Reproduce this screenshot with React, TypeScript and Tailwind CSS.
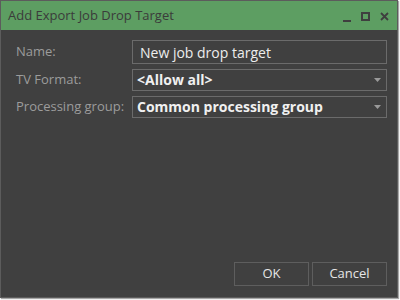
import React from "react";

function Field({ label, children }: { label: string; children: React.ReactNode }) {
  return (
    <div className="flex items-center">
      <div className="w-[116px] text-[13px] text-[#9c9c9c]">{label}</div>
      <div className="flex-1">{children}</div>
    </div>
  );
}

function Select({ value }: { value: string }) {
  return (
    <div className="h-[22px] border border-[#6b6b6b] flex items-center justify-between pl-[4px] pr-[4px]">
      <span className="text-[14px] font-bold text-[#f0f0f0] leading-none">{value}</span>
      <svg width="8" height="5" viewBox="0 0 8 5" className="mr-[0px]">
        <path d="M0 0h7L3.5 4z" fill="#9a9a9a" />
      </svg>
    </div>
  );
}

export default function App() {
  return (
    <div className="w-[400px] h-[300px] bg-white" style={{ fontFamily: '"Open Sans", "Noto Sans", sans-serif' }}>
      <div className="w-[398px] h-[298px] border border-[#5c5c5c] bg-[#404040] flex flex-col shadow-[1px_1px_1px_rgba(0,0,0,0.35)]">
        {/* Title bar */}
        <div className="h-[29px] bg-[#5d9e62] flex items-center justify-between pl-[7px] pr-[8px]">
          <span className="text-[13px] text-[#3b3b3b]">Add Export Job Drop Target</span>
          <div className="flex items-center gap-[10px] pt-[2px]">
            <svg width="8" height="10" viewBox="0 0 8 10">
              <rect x="0" y="8" width="8" height="2" fill="#3f3f3f" />
            </svg>
            <svg width="9" height="9" viewBox="0 0 9 9">
              <rect x="1" y="1" width="7" height="7" fill="none" stroke="#3f3f3f" strokeWidth="2" />
            </svg>
            <svg width="9" height="9" viewBox="0 0 9 9">
              <path d="M1 1l7 7M8 1l-7 7" stroke="#3f3f3f" strokeWidth="1.8" />
            </svg>
          </div>
        </div>

        {/* Form */}
        <div className="flex-1 flex flex-col pl-[15px] pr-[10px] pt-[10px]">
          <div className="flex flex-col gap-[5px]">
            <Field label="Name:">
              <div className="h-[24px] border border-[#6b6b6b] flex items-center pl-[7px]">
                <span className="text-[14px] text-[#ededed]">New job drop target</span>
              </div>
            </Field>
            <Field label="TV Format:">
              <Select value="<Allow all>" />
            </Field>
            <Field label="Processing group:">
              <Select value="Common processing group" />
            </Field>
          </div>
          <div className="flex-1" />
          <div className="flex justify-end gap-[3px] pb-[11px]">
            <button className="w-[75px] h-[24px] border border-[#5e5e5e] text-[13px] text-[#e6e6e6]">OK</button>
            <button className="w-[75px] h-[24px] border border-[#5e5e5e] text-[13px] text-[#e6e6e6]">Cancel</button>
          </div>
        </div>
      </div>
    </div>
  );
}
